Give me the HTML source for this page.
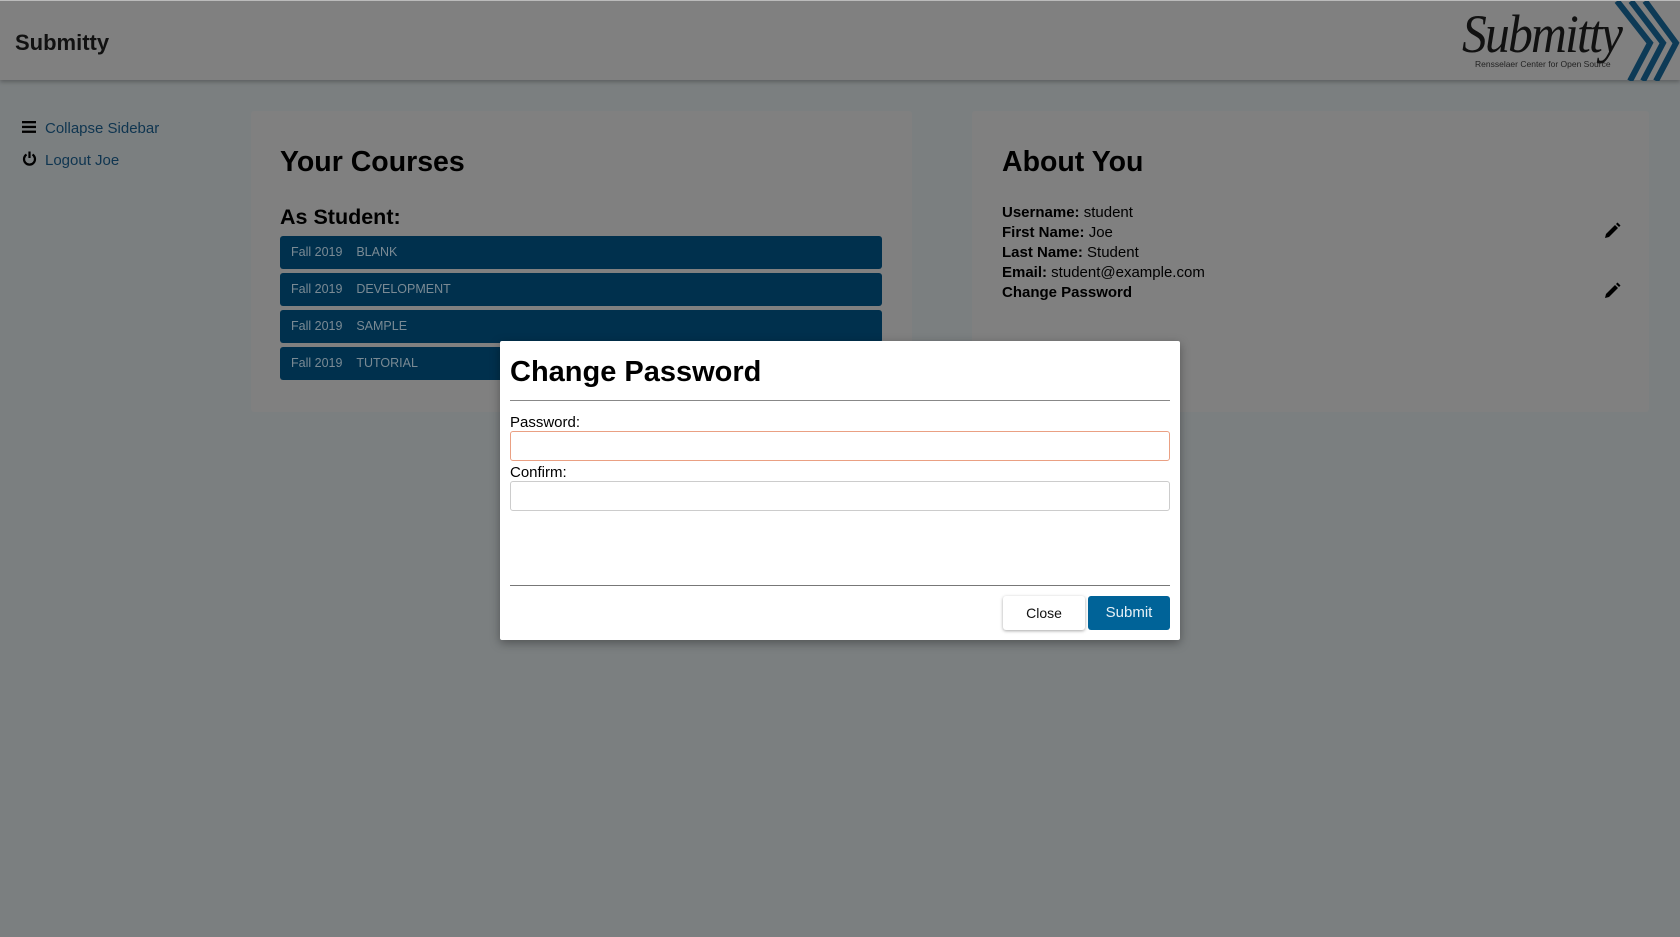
<!DOCTYPE html>
<html><head><meta charset="utf-8"><style>
*{box-sizing:border-box;margin:0;padding:0}
body{width:1680px;height:937px;background:#7b7f80;font-family:"Liberation Sans",sans-serif;position:relative;overflow:hidden;color:#000}
.hdr{position:absolute;left:0;top:0;width:1680px;height:80px;background:#808080;border-top:1px solid #bbb;box-shadow:0 2px 4px rgba(0,0,0,.25)}
.abs{position:absolute;white-space:nowrap}
.card{position:absolute;background:#808080;border-radius:3px}
.course{position:absolute;left:280px;width:602px;height:33px;background:#00304d;border-radius:3px;color:#7a8a94;font-size:12.5px;line-height:33px;padding-left:11px}
.info{font-size:15px;line-height:20px}
.modal{position:absolute;left:500px;top:341px;width:680px;height:299px;background:#fff;border-radius:2px;box-shadow:0 3px 10px rgba(0,0,0,.35)}
.inp{position:absolute;left:10px;width:660px;height:30px;border:1px solid #ccc;border-radius:3px}
.btn{position:absolute;top:255px;height:34px;width:82px;border-radius:3px;font-size:14px;text-align:center;line-height:34px}
</style></head><body>
<div class="hdr">
  <div class="abs" style="left:15px;top:29px;font-size:22px;font-weight:bold;color:#111">Submitty</div>
  <div class="abs" style="left:1462px;top:2px;font-family:'Liberation Serif',serif;font-style:italic;font-size:54px;color:#111;letter-spacing:-2px;transform:scaleX(0.92);transform-origin:left">Submitty</div>
  <div class="abs" style="left:1475px;top:58px;font-size:8.5px;color:#222">Rensselaer Center for Open Source</div>
  <svg class="abs" style="left:1600px;top:0" width="80" height="80">
    <g fill="none" stroke="#0d3a56" stroke-width="6">
      <polyline points="17,0 50,42 30,80"/>
      <polyline points="31,0 63,42 43,80"/>
      <polyline points="45,0 76,42 56,80"/>
    </g>
  </svg>
</div>
<svg class="abs" style="left:22px;top:120px" width="15" height="14"><g fill="#000"><rect x="0" y="1" width="14" height="2.3"/><rect x="0" y="5.8" width="14" height="2.3"/><rect x="0" y="10.6" width="14" height="2.3"/></g></svg>
<div class="abs" style="left:45px;top:120px;font-size:15px;color:#0f3550">Collapse Sidebar</div>
<svg class="abs" style="left:22px;top:151px" width="15" height="15"><path d="M4.5 3.5A5.5 5.5 0 1 0 10.5 3.5" fill="none" stroke="#000" stroke-width="2.2"/><line x1="7.5" y1="0.5" x2="7.5" y2="7" stroke="#000" stroke-width="2.2"/></svg>
<div class="abs" style="left:45px;top:152px;font-size:15px;color:#0f3550">Logout Joe</div>

<div class="card" style="left:251px;top:111px;width:661px;height:301px"></div>
<div class="abs" style="left:280px;top:146px;font-size:28.5px;font-weight:bold">Your Courses</div>
<div class="abs" style="left:280px;top:205px;font-size:21.5px;font-weight:bold">As Student:</div>
<div class="course" style="top:236px">Fall 2019&nbsp;&nbsp;&nbsp;&nbsp;BLANK</div>
<div class="course" style="top:273px">Fall 2019&nbsp;&nbsp;&nbsp;&nbsp;DEVELOPMENT</div>
<div class="course" style="top:310px">Fall 2019&nbsp;&nbsp;&nbsp;&nbsp;SAMPLE</div>
<div class="course" style="top:347px">Fall 2019&nbsp;&nbsp;&nbsp;&nbsp;TUTORIAL</div>

<div class="card" style="left:972px;top:111px;width:677px;height:301px"></div>
<div class="abs" style="left:1002px;top:146px;font-size:28.5px;font-weight:bold">About You</div>
<div class="abs info" style="left:1002px;top:203px"><b>Username:</b> student<br><b>First Name:</b> Joe<br><b>Last Name:</b> Student<br><b>Email:</b> student@example.com<br><b>Change Password</b></div>
<svg class="abs" style="left:1603px;top:222px" width="18" height="18"><path d="M2 16 L3 12 L12 3 L15 6 L6 15 Z" fill="#000"/><path d="M13 2 L14.5 0.5 L17.5 3.5 L16 5 Z" fill="#000"/></svg>
<svg class="abs" style="left:1603px;top:282px" width="18" height="18"><path d="M2 16 L3 12 L12 3 L15 6 L6 15 Z" fill="#000"/><path d="M13 2 L14.5 0.5 L17.5 3.5 L16 5 Z" fill="#000"/></svg>

<div class="modal">
  <div class="abs" style="left:10px;top:15px;font-size:29px;font-weight:bold">Change Password</div>
  <div class="abs" style="left:10px;top:59px;width:660px;border-top:1px solid #888"></div>
  <div class="abs" style="left:10px;top:73px;font-size:15px">Password:</div>
  <div class="inp" style="top:90px;border-color:#eaa083"></div>
  <div class="abs" style="left:10px;top:123px;font-size:15px">Confirm:</div>
  <div class="inp" style="top:140px"></div>
  <div class="abs" style="left:10px;top:244px;width:660px;border-top:1px solid #777"></div>
  <div class="btn" style="left:503px;background:#fff;box-shadow:0 1px 3px rgba(0,0,0,.35);color:#111">Close</div>
  <div class="btn" style="left:588px;background:#006398;color:#e6f0f6;font-size:15px">Submit</div>
</div>
</body></html>
